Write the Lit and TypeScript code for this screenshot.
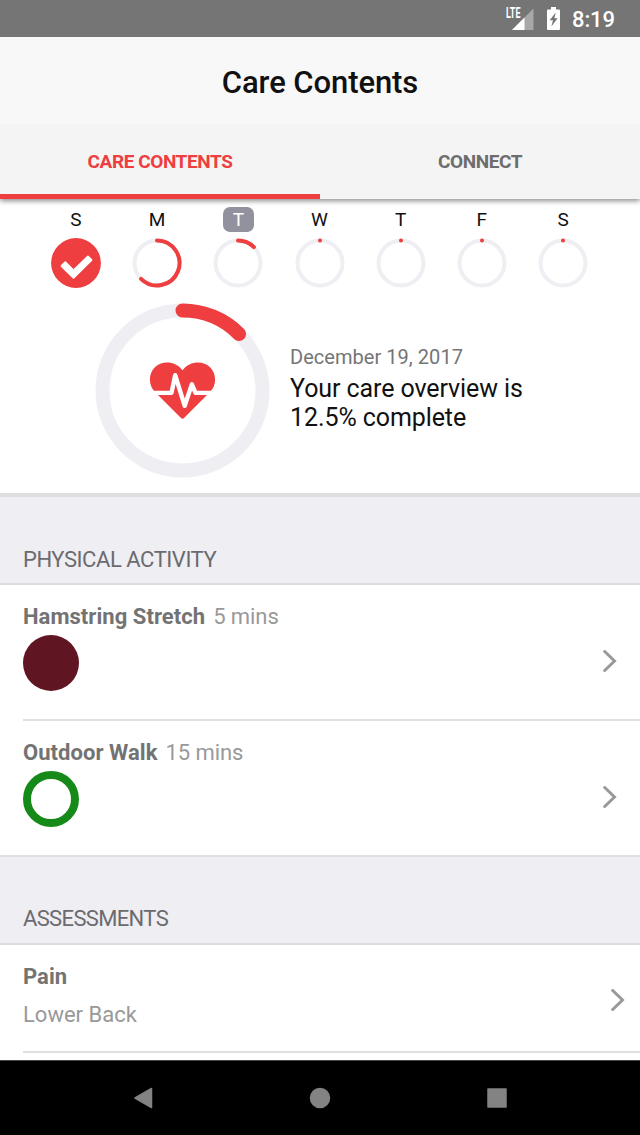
import { LitElement, html, css, svg } from "lit";
import { customElement, property } from "lit/decorators.js";

@customElement("progress-ring")
class ProgressRing extends LitElement {
  @property({ type: Number }) size = 49;
  @property({ type: Number }) stroke = 4;
  @property({ type: Number }) value = 0;

  static styles = css`
    :host { display: block; }
    svg { display: block; }
    .track { fill: none; stroke: #efeef3; }
    .bar { fill: none; stroke: #ee3e3f; stroke-linecap: round; }
    .full { fill: #ee3e3f; }
    .check { fill: #fff; stroke: #fff; stroke-width: 1.8; stroke-linejoin: round; }
    .pulse { fill: none; stroke: #fff; stroke-width: 4.4; stroke-linejoin: round; }
  `;

  render() {
    const s = this.size;
    const c = s / 2;
    const r = (s - this.stroke) / 2;
    const a = Math.max(this.value, 0.0001) * 2 * Math.PI;
    const x = c + r * Math.sin(a);
    const y = c - r * Math.cos(a);
    const large = this.value > 0.5 ? 1 : 0;
    return html`<svg width=${s + 1} height=${s + 1} viewBox="-0.5 -0.5 ${s + 1} ${s + 1}">
      ${this.value >= 1
        ? svg`<circle class="full" cx=${c} cy=${c} r=${c + 0.4}/>
          <path class="check" d="M10 27.5 22 39.4 40 21.5 36.4 17.9 22 31.8 13.8 23.7Z"/>`
        : svg`<circle class="track" cx=${c} cy=${c} r=${r} stroke-width=${this.stroke}/>
          <path class="bar" stroke-width=${this.stroke} d="M${c} ${c - r}A${r} ${r} 0 ${large} 1 ${x} ${y}"/>`}
      ${s > 100
        ? svg`<path class="full" d="M87 66.7C83 61.5 77.5 59 71.5 59 62 59 54.4 66 54.4 76 54.4 81.5 56.5 85.5 59.5 88.5L85.5 114.6Q87 116 88.5 114.6L114.5 88.5C117.5 85.5 119.6 81.5 119.6 76 119.6 66 112 59 102.5 59 96.5 59 91 61.5 87 66.7Z"/>
          <path class="pulse" d="M52 89.4H76L79.7 71.7 89.2 102.3 96.4 80.8 100 89.4H122"/>`
        : ""}
    </svg>`;
  }
}

@customElement("app-root")
class AppRoot extends LitElement {
  static styles = css`
    :host { display: flex; flex-direction: column; width: 640px; height: 1135px; overflow: hidden; background: #fff; font-family: Roboto, sans-serif; color: #111; }
    * { box-sizing: border-box; }
    svg { display: block; flex: none; }
    .status { height: 37px; flex: none; background: #757575; display: flex; justify-content: flex-end; align-items: flex-start; padding: 0 25px 0 0; color: #fff; font-size: 22px; line-height: 36px; font-weight: 500; }
    .clock { width: 43px; margin-left: 12px; white-space: nowrap; letter-spacing: -0.1px; padding-top: 2px; }
    .bat { margin: 7px 0 0 13px; }
    .lte { font-size: 14px; font-weight: 700; fill: #fff; }
    .title { height: 87px; flex: none; background: #f8f8f8; text-align: center; font-size: 31px; font-weight: 500; line-height: 91px; letter-spacing: -0.08px; }
    .tabs { height: 75px; flex: none; display: flex; background: #f4f4f4; box-shadow: 0 2px 5px rgba(0,0,0,.45); clip-path: inset(0 0 -12px 0); z-index: 1; }
    .tab { flex: 1; text-align: center; font-size: 19px; font-weight: 700; line-height: 76px; color: #6d6d6d; letter-spacing: -0.42px; }
    .on { color: #ee3e3f; border-bottom: 5px solid #ee3e3f; }
    .week { height: 89px; flex: none; display: grid; grid-template-columns: repeat(7, 81.2px); justify-content: center; padding: 8px 1px 0 0; }
    .day { display: flex; flex-direction: column; align-items: center; gap: 6px; font-size: 19px; }
    .name { height: 25px; width: 31px; line-height: 26px; text-align: center; border-radius: 7px; }
    .today { background: #92919e; color: #fff; }
    .overview { height: 209px; flex: none; display: flex; padding: 15px 0 0 95px; border-bottom: 4px solid #dfdfe0; gap: 20px; }
    .info { padding-top: 42px; }
    .date { font-size: 20px; line-height: 24px; color: #757575; letter-spacing: 0.04px; }
    .sum { font-size: 25px; line-height: 29px; margin-top: 5px; white-space: nowrap; letter-spacing: -0.09px; }
    .head { flex: none; height: 88px; background: #efeef3; border-bottom: 2px solid #dcdcde; padding: 49.5px 23px 0; font-size: 22px; line-height: 26px; color: #6b6b6f; letter-spacing: -0.45px; }
    .assess { letter-spacing: -0.65px; padding-top: 49px; }
    .row { flex: none; height: 136px; display: flex; margin-left: 23px; border-bottom: 2px solid #e0e0e0; padding: 19px 23px 0 0; justify-content: space-between; font-size: 22px; line-height: 26px; color: #999; }
    .last { margin-left: 0; padding-left: 23px; }
    .short { height: 108px; padding-right: 15px; }
    .row b { color: #737373; margin-right: 8px; font-weight: 700; letter-spacing: 0.05px; }
    .mins { letter-spacing: -0.08px; }
    .dot { width: 56px; height: 56px; border-radius: 50%; margin-top: 5px; background: #601522; }
    .hollow { background: none; border: 8px solid #158a18; }
    .sub { margin-top: 12px; }
    .chev { margin-top: 46px; fill: none; stroke: #999; stroke-width: 3; stroke-linecap: round; }
    .short .chev { margin-top: 25px; }
    .nav { height: 75px; flex: none; margin-top: auto; background: #000; border-top: 1px solid #444; display: flex; justify-content: space-around; padding: 0 55px; align-items: center; }
    .nav svg { fill: #838383; stroke: #838383; stroke-width: 1.5; stroke-linejoin: round; }
  `;

  days: [string, number][] = [["S", 1], ["M", 0.625], ["T", 0.125], ["W", 0], ["T", 0], ["F", 0], ["S", 0]];

  chevron() {
    return html`<svg class="chev" width="14" height="22" viewBox="0 0 14 22"><path d="M1.7 1.5 11.5 11 1.7 20.5"/></svg>`;
  }

  render() {
    return html`
      <div class="status">
        <svg width="28" height="37" viewBox="0 0 28 37">
          <path fill="#a8a8a8" d="M27.5 8.5V30H6Z"/>
          <path fill="#fff" d="M18.5 17.5V30H6Z"/>
          <path fill="#757575" d="M0 5H16V18.5H0Z"/>
          <text class="lte" x="0" y="17.9" textLength="14.5" lengthAdjust="spacingAndGlyphs">LTE</text>
        </svg>
        <svg class="bat" width="13" height="23" viewBox="0 0 13 23">
          <path fill="#fff" d="M4 0H9V2.5H12Q13 2.5 13 3.5V22Q13 23 12 23H1Q0 23 0 22V3.5Q0 2.5 1 2.5H4Z"/>
          <path fill="#757575" d="M8.8 5.5 2.6 13.2H6L4.4 19.5 10.6 11.3H7.3Z"/>
        </svg>
        <div class="clock">8:19</div>
      </div>
      <div class="title">Care Contents</div>
      <div class="tabs"><div class="tab on">CARE CONTENTS</div><div class="tab">CONNECT</div></div>
      <div class="week">
        ${this.days.map(([n, v], i) => html`<div class="day">
          <div class="name ${i === 2 ? "today" : ""}">${n}</div>
          <progress-ring .size=${49} .stroke=${4} .value=${v}></progress-ring>
        </div>`)}
      </div>
      <div class="overview">
        <progress-ring .size=${174} .stroke=${14} .value=${0.125}></progress-ring>
        <div class="info">
          <div class="date">December 19, 2017</div>
          <div class="sum">Your care overview is<br>12.5% complete</div>
        </div>
      </div>
      <div class="head">PHYSICAL ACTIVITY</div>
      <div class="row"><div><b>Hamstring Stretch</b><span class="mins">5 mins</span><div class="dot"></div></div>${this.chevron()}</div>
      <div class="row last"><div><b>Outdoor Walk</b><span class="mins">15 mins</span><div class="dot hollow"></div></div>${this.chevron()}</div>
      <div class="head assess">ASSESSMENTS</div>
      <div class="row short"><div><b>Pain</b><div class="sub">Lower Back</div></div>${this.chevron()}</div>
      <div class="nav">
        <svg width="20" height="22" viewBox="0 0 20 22"><path d="M18.5 1.5V20.5L2 11Z"/></svg>
        <svg width="22" height="22" viewBox="0 0 22 22"><circle cx="11" cy="11" r="9.5"/></svg>
        <svg width="20" height="20" viewBox="0 0 20 20"><path d="M1 1H19V19H1Z"/></svg>
      </div>`;
  }
}
